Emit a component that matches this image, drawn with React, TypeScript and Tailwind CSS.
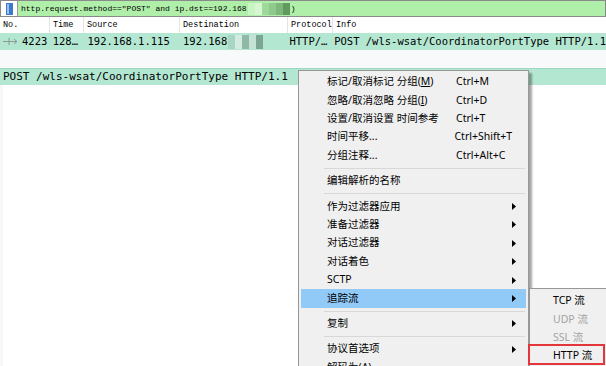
import React from "react";

type Item =
  | { sep: true }
  | { label: React.ReactNode; shortcut?: string; arrow?: boolean; active?: boolean };

const items: Item[] = [
  { label: <>标记/取消标记 分组(<span className="underline">M</span>)</>, shortcut: "Ctrl+M" },
  { label: <>忽略/取消忽略 分组(<span className="underline">I</span>)</>, shortcut: "Ctrl+D" },
  { label: "设置/取消设置 时间参考", shortcut: "Ctrl+T" },
  { label: "时间平移...", shortcut: "Ctrl+Shift+T" },
  { label: "分组注释...", shortcut: "Ctrl+Alt+C" },
  { sep: true },
  { label: "编辑解析的名称" },
  { sep: true },
  { label: "作为过滤器应用", arrow: true },
  { label: "准备过滤器", arrow: true },
  { label: "对话过滤器", arrow: true },
  { label: "对话着色", arrow: true },
  { label: "SCTP", arrow: true },
  { label: "追踪流", arrow: true, active: true },
  { sep: true },
  { label: "复制", arrow: true },
  { sep: true },
  { label: "协议首选项", arrow: true },
  { label: "解码为(A)..." },
];

function Arrow() {
  return (
    <svg width="4" height="7" viewBox="0 0 4 7" className="block">
      <path d="M0 0 L4 3.5 L0 7 Z" fill="#000" />
    </svg>
  );
}

function Mosaic({ colors }: { colors: string[] }) {
  return (
    <span className="inline-flex h-full items-stretch">
      {colors.map((c, i) => (
        <span key={i} className="w-[7px]" style={{ background: c }} />
      ))}
    </span>
  );
}

export default function App() {
  const cols = [
    { name: "No.", w: "w-[50px]" },
    { name: "Time", w: "w-[34px]" },
    { name: "Source", w: "w-[96px]" },
    { name: "Destination", w: "w-[108px]" },
    { name: "Protocol", w: "w-[45px]" },
  ];

  return (
    <div className="relative w-[606px] h-[366px] overflow-hidden bg-white" style={{ fontFamily: "'Noto Sans', 'Noto Sans CJK SC', sans-serif" }}>
      {/* FILTER BAR */}
      <div className="flex h-[17px] border border-[#8a8a8a]">
        <div className="w-[17px] flex items-center justify-center bg-white border-r border-[#9a9a9a]">
          <svg width="7" height="12" viewBox="0 0 7 12">
            <rect x="0" y="0" width="7" height="12" fill="#3b78d0" />
            <rect x="1" y="1" width="2" height="10" fill="#9cc0ee" />
          </svg>
        </div>
        <div className="flex-1 flex items-center bg-[#afefa9] pl-[3px] text-[8px] text-black whitespace-nowrap" style={{ fontFamily: "'Liberation Mono', monospace" }}>
          <span>http.request.method=="POST" and ip.dst==192.168</span>
          <span className="h-[12px] ml-[1px] flex">
            <Mosaic colors={["#c8f5c2", "#d7f7d2", "#9fd99a", "#8fc98b", "#7fb67c", "#5f9a5e"]} />
          </span>
          <span className="ml-[1px]">)</span>
        </div>
      </div>

      {/* HEADER */}
      <div className="flex h-[16px] text-[8.5px] text-black" style={{ fontFamily: "'Liberation Mono', monospace" }}>
        {cols.map((c) => (
          <div key={c.name} className={`${c.w} flex items-center pl-[3px] border-r border-[#e4e4e4]`}>
            {c.name}
          </div>
        ))}
        <div className="flex-1 flex items-center pl-[3px]">Info</div>
      </div>

      {/* PACKET ROW */}
      <div className="flex h-[17px] bg-[#b4e7d1] text-[10.5px] text-black whitespace-nowrap" style={{ fontFamily: "'DejaVu Sans Mono', monospace" }}>
        <div className="w-[50px] flex items-center">
          <svg width="16" height="7" viewBox="0 0 16 7" className="ml-[3px] mr-[3px]">
            <path d="M0 3.5 H14 M11 1 L14 3.5 L11 6" stroke="#8a9a92" strokeWidth="1" fill="none" />
            <path d="M6 0 V7" stroke="#8a9a92" strokeWidth="1" />
          </svg>
          <span>4223</span>
        </div>
        <div className="w-[34px] flex items-center pl-[3px]">128…</div>
        <div className="w-[96px] flex items-center pl-[4px]">192.168.1.115</div>
        <div className="w-[108px] flex items-center pl-[4px]">
          192.168
          <span className="h-[14px] flex ml-[1px]">
            <Mosaic colors={["#a9d6c2", "#d3ece2", "#8fb8a7", "#c4e3d6", "#7ca594"]} />
          </span>
        </div>
        <div className="w-[45px] flex items-center pl-[3px]">HTTP/…</div>
        <div className="flex-1 flex items-center pl-[3px]">POST /wls-wsat/CoordinatorPortType HTTP/1.1</div>
      </div>

      {/* GAP */}
      <div className="h-[18px] bg-[#f8f9fb]" />

      {/* DETAIL ROW */}
      <div className="flex">
        <div className="flex-1 h-[17px] bg-[#b4e7d1] border-t border-[#9fd8c0] flex items-center pl-[3px] text-[11px] text-black whitespace-nowrap" style={{ fontFamily: "'DejaVu Sans Mono', monospace" }}>
          POST /wls-wsat/CoordinatorPortType HTTP/1.1
        </div>
      </div>
      <div className="flex h-[300px]">
        <div className="w-[3px] bg-[#f7f8fa]" />
        <div className="flex-1 bg-white" />
      </div>

      {/* CONTEXT MENU */}
      <div className="absolute left-[298px] top-[70px] w-[231px] h-[310px] bg-[#f0f0f0] border border-[#979797] shadow-[3px_3px_2px_rgba(0,0,0,0.35)] pt-[2px] px-[2px] text-[10.5px] text-black">
        {items.map((it, i) =>
          "sep" in it ? (
            <div key={i} className="h-[7px] flex items-center pl-[23px] pr-[1px]">
              <div className="h-px w-full bg-[#d8d8d8]" />
            </div>
          ) : (
            <div key={i} className={`h-[18.4px] flex items-center ${it.active ? "bg-[#91c9f7]" : ""}`}>
              <div className="w-[155px] pl-[26px] whitespace-nowrap">{it.label}</div>
              <div className="flex-1 whitespace-nowrap">{it.shortcut}</div>
              <div className="w-[14px]">{it.arrow && <Arrow />}</div>
            </div>
          )
        )}
      </div>

      {/* SUB MENU */}
      <div className="absolute left-[529px] top-[288px] w-[90px] h-[90px] bg-[#f0f0f0] border border-[#979797] pt-[3px] text-[10.5px]">
        <div className="h-[18.4px] flex items-center pl-[23px] text-black">TCP 流</div>
        <div className="h-[18.4px] flex items-center pl-[23px] text-[#a3a3a3]">UDP 流</div>
        <div className="h-[18.4px] flex items-center pl-[23px] text-[#a3a3a3]">SSL 流</div>
        <div className="h-[18.4px] flex items-center pl-[23px] text-black">HTTP 流</div>
      </div>
      {/* highlight box */}
      <div className="absolute left-[528px] top-[344px] w-[77px] h-[21px] border-2 border-[#e2363b]" />
    </div>
  );
}
